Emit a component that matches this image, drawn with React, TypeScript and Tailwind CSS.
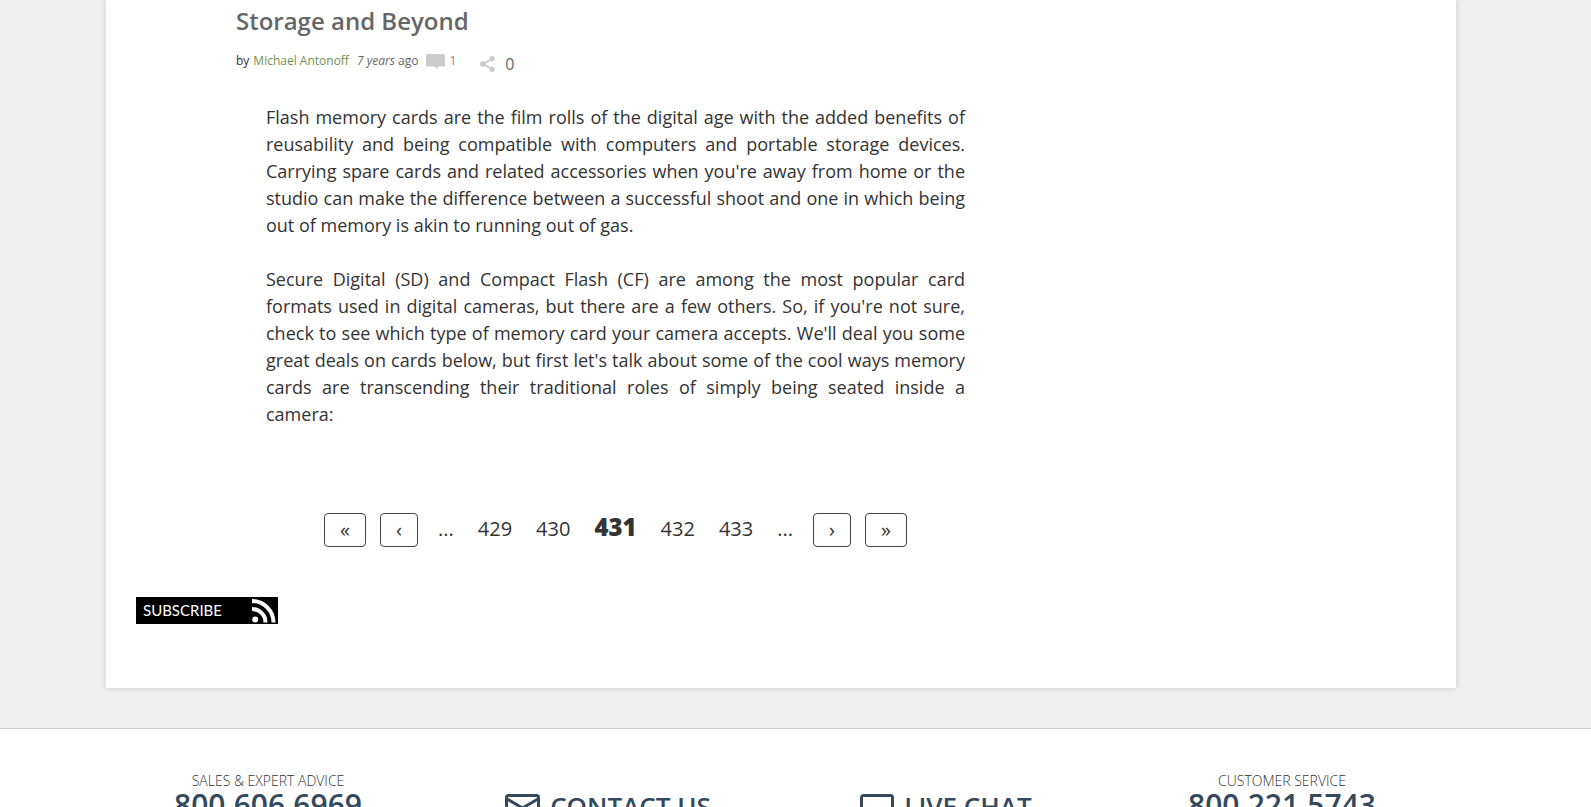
import { ReactNode } from "react";

const pages = [429, 430, 431, 432, 433];

const paragraphs = [
  "Flash memory cards are the film rolls of the digital age with the added benefits of reusability and being compatible with computers and portable storage devices. Carrying spare cards and related accessories when you're away from home or the studio can make the difference between a successful shoot and one in which being out of memory is akin to running out of gas.",
  "Secure Digital (SD) and Compact Flash (CF) are among the most popular card formats used in digital cameras, but there are a few others. So, if you're not sure, check to see which type of memory card your camera accepts. We'll deal you some great deals on cards below, but first let's talk about some of the cool ways memory cards are transcending their traditional roles of simply being seated inside a camera:",
];

function CommentIcon() {
  return (
    <svg width="19" height="15" viewBox="0 0 19 15" fill="#cbcbcb" aria-hidden="true">
      <path d="M1.5 0h16A1.5 1.5 0 0 1 19 1.5v9.500a1.500 1.500 0 0 1-1.500 1.500H12V15l-3.500-2.500h-7A1.500 1.500 0 0 1 0 11V1.500A1.500 1.500 0 0 1 1.500 0z" />
    </svg>
  );
}

function ShareIcon() {
  return (
    <svg width="15" height="16" viewBox="0 0 15 16" fill="#cbcbcb" aria-hidden="true">
      <path d="M12 3 3 8l9 5" fill="none" stroke="#cbcbcb" strokeWidth="2" />
      <circle cx="12" cy="2.800" r="2.700" />
      <circle cx="2.800" cy="8" r="2.700" />
      <circle cx="12" cy="13.200" r="2.700" />
    </svg>
  );
}

function RssIcon() {
  return (
    <svg width="24" height="24" viewBox="0 0 24 24" fill="none" stroke="#fff" strokeWidth="4" aria-hidden="true">
      <circle cx="3.200" cy="20.500" r="3" fill="#fff" stroke="none" />
      <path d="M0 10a13.500 13.500 0 0 1 13.500 13.500" />
      <path d="M0 2a21.500 21.500 0 0 1 21.500 21.500" />
    </svg>
  );
}

function MailIcon() {
  return (
    <svg className="mt-1" width="35" height="26" viewBox="0 0 35 26" fill="none" stroke="#34495e" strokeWidth="3" aria-hidden="true">
      <rect x="1.500" y="1.500" width="32" height="23" rx="2" />
      <path d="m2 5 15.500 9L33 5" />
    </svg>
  );
}

function ChatIcon() {
  return (
    <svg className="mt-1" width="34" height="30" viewBox="0 0 34 30" fill="none" stroke="#34495e" strokeWidth="3" aria-hidden="true">
      <path d="M3.500 1.500h27a2 2 0 0 1 2 2v18a2 2 0 0 1-2 2H16l-6 5v-5H3.500a2 2 0 0 1-2-2v-18a2 2 0 0 1 2-2z" />
    </svg>
  );
}

function PageButton({ label, wide, children }: { label: string; wide?: boolean; children: ReactNode }) {
  return (
    <button
      type="button"
      aria-label={label}
      className={`h-[34px] rounded-[4px] border border-[#444] text-xl leading-8 ${wide ? "w-[42px]" : "w-[38px]"}`}
    >
      {children}
    </button>
  );
}

function PhoneColumn({ title, phone }: { title: string; phone: string }) {
  return (
    <div className="text-center">
      <p className="text-sm leading-5 font-light text-[#333]">{title}</p>
      <a href={`tel:${phone}`} className="block text-[30px] leading-7 font-semibold">
        {phone}
      </a>
    </div>
  );
}

export default function App() {
  return (
    <div className="h-screen overflow-hidden bg-[#f0f0f0] font-['Open_Sans',sans-serif] text-[#333]">
      <main className="ml-[106px] mr-[135px] bg-white px-[30px] pb-16 shadow-[0_0_6px_rgba(0,0,0,0.15)]">
        <article className="ml-[100px] max-w-[760px] pt-[3px]">
          <h2 className="text-2xl leading-9 font-semibold text-[#666]">Storage and Beyond</h2>

          <div className="mt-[10px] flex h-8 items-start text-xs leading-6">
            <span>by</span>
            <a href="#author" className="ml-1 text-[#6f9150]">Michael Antonoff</a>
            <span className="ml-2 text-[#666]">
              <em>7 years</em> ago
            </span>
            <a href="#comments" className="ml-2 flex text-[#888]">
              <span className="pt-[5px]"><CommentIcon /></span>
              <span className="ml-1">1</span>
            </a>
            <button type="button" className="ml-6 flex items-center gap-[10px] pt-[3px] text-base leading-6 text-[#666]">
              <ShareIcon />
              0
            </button>
          </div>

          <div className="mt-[23px] ml-[30px] w-full max-w-[699px] space-y-[27px] text-justify text-lg leading-[27px]">
            {paragraphs.map((text) => (
              <p key={text}>{text}</p>
            ))}
          </div>
        </article>

        <nav aria-label="Pagination" className="mt-[85px] ml-[188px] flex h-[34px] items-center gap-[14px]">
          <PageButton label="First page" wide>«</PageButton>
          <PageButton label="Previous page">‹</PageButton>
          <div className="flex items-baseline gap-6 px-[6px] pb-1 text-xl leading-8">
            <span>...</span>
            {pages.map((page) => (
              <a
                key={page}
                href={`#page-${page}`}
                className={page === 431 ? "text-2xl leading-8 font-extrabold" : ""}
              >
                {page}
              </a>
            ))}
            <span>...</span>
          </div>
          <PageButton label="Next page">›</PageButton>
          <PageButton label="Last page" wide>»</PageButton>
        </nav>

        <a
          href="#subscribe"
          className="mt-[50px] flex h-[27px] w-[142px] items-center justify-between bg-black pr-[2px] pl-[7px] font-[Lato,sans-serif] text-[15px] text-white"
        >
          SUBSCRIBE
          <RssIcon />
        </a>
      </main>

      <footer className="mt-10 border-t border-[#ccc] bg-white pt-[42px] pb-10 text-[#34495e]">
        <div className="mr-[140px] ml-[99px] grid grid-cols-4">
          <PhoneColumn title="SALES & EXPERT ADVICE" phone="800.606.6969" />
          <a href="#contact" className="flex justify-center gap-[10px] pt-[19px] pl-1 text-[26px] leading-8 font-semibold">
            <MailIcon />
            CONTACT US
          </a>
          <a href="#chat" className="flex justify-center gap-[10px] pt-[19px] pl-1 text-[26px] leading-8 font-semibold">
            <ChatIcon />
            LIVE CHAT
          </a>
          <PhoneColumn title="CUSTOMER SERVICE" phone="800.221.5743" />
        </div>
      </footer>
    </div>
  );
}
